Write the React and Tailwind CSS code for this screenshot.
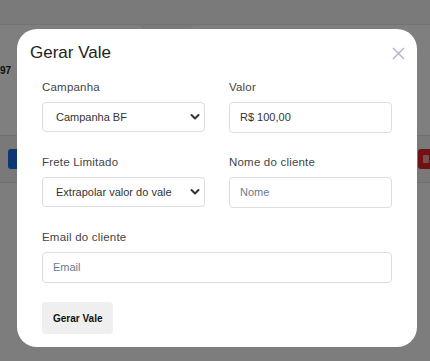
import React from 'react';

const font = { fontFamily: '"Liberation Sans", Arial, sans-serif' };

const Chevron = () => (
  <svg width="10" height="7" viewBox="0 0 10 7" className="pointer-events-none absolute right-[4px] top-1/2 -translate-y-1/2">
    <path d="M1.5 1.5 L5 5 L8.5 1.5" fill="none" stroke="#333" strokeWidth="2" strokeLinecap="round" strokeLinejoin="round" />
  </svg>
);

const Field = ({ label, children, wide }) => (
  <div className={wide ? 'col-span-2' : ''}>
    <label className="block h-4 text-[11.5px] leading-4 text-[#444] tracking-[0.2px]">{label}</label>
    <div className="mt-[7px]">{children}</div>
  </div>
);

const SelectBox = ({ value }) => (
  <div className="relative flex h-[30px] items-center rounded-[4px] border border-[#dddddd] bg-white pl-[13px] text-[11px] text-[#333]">
    {value}
    <Chevron />
  </div>
);

const InputBox = ({ value, placeholder }) => (
  <div className="flex h-[31px] items-center rounded-[4px] border border-[#dddddd] bg-white pl-[10px] text-[11px]">
    {value ? <span className="text-[#333]">{value}</span> : <span className="text-[#6b7a90]">{placeholder}</span>}
  </div>
);

const BackgroundPage = () => (
  <div className="flex h-[361px] flex-col bg-[#f5f5f5]">
    <div className="h-[25px] shrink-0 border-b border-[#e6e6e6]" />
    <div className="flex h-[110px] shrink-0 gap-[47px]">
      <div className="flex w-[143px] items-start rounded-br-[6px] rounded-tr-[6px] bg-white pt-[38px]">
        <span className="text-[10px] font-bold text-[#222]">97</span>
      </div>
      <div className="flex-1 rounded-tl-[6px] bg-white" />
    </div>
    <div className="flex h-[48px] shrink-0 items-center justify-between border-y border-[#e3e3e3] bg-[#f3f3f3] pl-2">
      <div className="h-5 w-[13px] rounded-l-[3px] bg-[#1a6fe8]" />
      <div className="flex h-5 w-3 items-center justify-end rounded-l-[3px] bg-[#e02424] pr-[1px]">
        <div className="h-[8px] w-[6px] rounded-[1px] bg-[#f0a0a0]" />
      </div>
    </div>
    <div className="flex-1 bg-[#fafafa]" />
  </div>
);

export default function App() {
  return (
    <div className="relative h-[361px] w-[430px] overflow-hidden" style={font}>
      <BackgroundPage />
      <div className="absolute inset-0 flex items-start bg-black/50 pl-[17px] pt-[29px]">
        <div className="w-[400px] rounded-[20px] bg-white pb-[13px] pt-3">
          <div className="flex items-center justify-between pl-[13px] pr-[12px]">
            <h2 className="text-[17px] leading-6 text-[#222]">Gerar Vale</h2>
            <svg width="13" height="13" viewBox="0 0 13 13">
              <path d="M1 1 L12 12 M12 1 L1 12" stroke="#a9b6cc" strokeWidth="1.4" />
            </svg>
          </div>
          <div className="px-[25px] pt-[14px]">
            <div className="grid grid-cols-2 gap-x-6 gap-y-[21px]">
              <Field label="Campanha">
                <SelectBox value="Campanha BF" />
              </Field>
              <Field label="Valor">
                <InputBox value="R$ 100,00" />
              </Field>
              <Field label="Frete Limitado">
                <SelectBox value="Extrapolar valor do vale" />
              </Field>
              <Field label="Nome do cliente">
                <InputBox placeholder="Nome" />
              </Field>
              <Field label="Email do cliente" wide>
                <InputBox placeholder="Email" />
              </Field>
            </div>
            <button className="mt-[19px] h-8 rounded-[4px] bg-[#efefef] px-[11px] text-[10px] font-bold text-[#111]">
              Gerar Vale
            </button>
          </div>
        </div>
      </div>
    </div>
  );
}
